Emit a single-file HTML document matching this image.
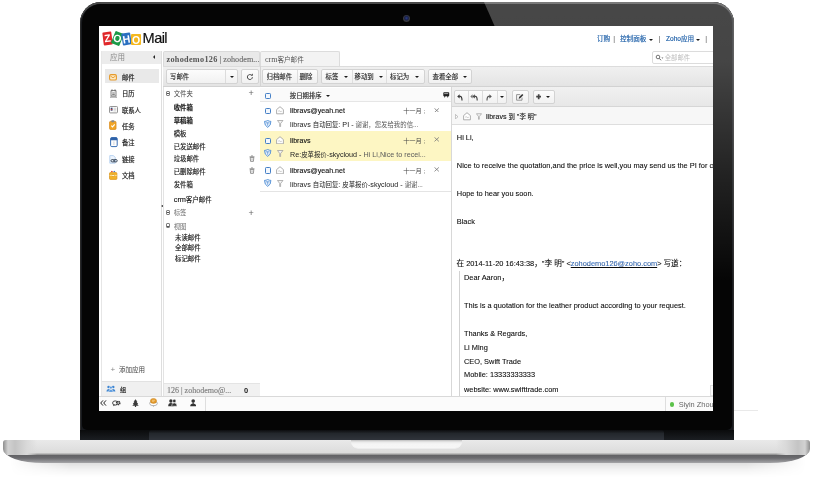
<!DOCTYPE html>
<html lang="zh-CN">
<head>
<meta charset="utf-8">
<title>Zoho Mail</title>
<style>
html,body{margin:0;padding:0;}
body{width:816px;height:480px;background:#fff;position:relative;overflow:hidden;
 font-family:"Liberation Sans","Noto Sans CJK SC",sans-serif;font-size:8px;color:#222;}
.a{position:absolute;}
/* ---------- laptop ---------- */
#lid{left:80px;top:2px;width:654px;height:438px;background:#17191d;border-radius:21px 21px 0 0;overflow:hidden;
 box-shadow:inset 0 2px 0 #4a4a4a, inset 1px 0 0 #2a2a2a, inset -1px 0 0 #2a2a2a;}
#lidin{left:2px;top:2px;width:650px;height:426px;background:#050505;border-radius:19px 19px 5px 5px;}
#glare{left:0;top:0;width:654px;height:300px;
 background:linear-gradient(180deg,rgba(255,255,255,.265) 0,rgba(255,255,255,.255) 60px,rgba(255,255,255,.12) 170px,rgba(255,255,255,0) 280px);
 clip-path:polygon(404px 0,654px 0,654px 300px,536px 300px);}
#lidbot{left:0;top:428px;width:654px;height:10px;background:linear-gradient(180deg,#0a0b0c 0,#1b1e22 100%);}
#hinge{left:69px;top:428px;width:515px;height:10px;background:linear-gradient(180deg,#0c0d0f 0,#23272c 35%,#30343b 100%);border-radius:3px 3px 0 0;}
#cam{left:323px;top:13px;width:7px;height:7px;border-radius:50%;background:radial-gradient(circle at 50% 45%,#2a3c8a 0,#1a2248 35%,#3a3a3e 60%,#1a1a1a 100%);}
#screen{left:99px;top:26px;width:614px;height:385px;background:#fff;overflow:hidden;}
#scr{left:-99px;top:-26px;width:816px;height:480px;will-change:transform;}
#shadow{left:10px;top:455px;width:796px;height:22px;background:linear-gradient(180deg,rgba(0,0,0,.13) 0,rgba(0,0,0,.12) 8px,rgba(0,0,0,.05) 14px,rgba(0,0,0,0) 22px);
 -webkit-mask-image:linear-gradient(90deg,transparent 0,#000 60px,#000 736px,transparent 796px);mask-image:linear-gradient(90deg,transparent 0,#000 60px,#000 736px,transparent 796px);}
#base{left:3px;top:440px;width:807px;height:23px;border-radius:3px 3px 40px 40px / 3px 3px 14px 14px;overflow:hidden;
 background:linear-gradient(180deg,#e9e9e9 0,#e3e3e3 6px,#dcdcdc 12.5px,#a8a8a8 14.200px,#636366 15.500px,#6b6b6f 18px,#8e8e91 21px,#a6a6a8 23px);}
#baseL{left:0;top:0;width:34px;height:15px;background:linear-gradient(90deg,#8e8e8e 0,#d2d2d2 5px,#c4c4c4 12px,#d9d9d9 24px,rgba(225,225,225,0) 34px);}
#baseR{right:0;top:0;width:34px;height:15px;background:linear-gradient(270deg,#8e8e8e 0,#d2d2d2 5px,#c4c4c4 12px,#d9d9d9 24px,rgba(225,225,225,0) 34px);}
#notch{left:351px;top:440px;width:111px;height:8px;border-radius:0 0 7px 7px;background:linear-gradient(180deg,#bdbdbd 0,#e9e9e9 2px,#f5f5f5 4px,#f6f6f6 100%);box-shadow:0 .5px 0 #fafafa;}
#artline{left:714px;top:410px;width:44px;height:1px;background:#e9e9e9;}

/* ---------- screen ---------- */
#scr{font-size:6.5px;line-height:10px;color:#222;}
.t{position:absolute;white-space:nowrap;line-height:10px;}
.lg{border-radius:1px;text-align:center;}
.lg span{display:block;font:bold 10.500px/12.500px "Liberation Sans",sans-serif;color:#fff;margin:0 -2px;}
.lnk{color:#1d5fa8;font-size:6.600px;-webkit-text-stroke:.15px #1d5fa8;}
.sep{font-size:7px;color:#555;}
.dd{width:0;height:0;border:2.300px solid transparent;border-top:2.700px solid #1a1a1a;border-bottom:0;}
.sb{font-size:6.300px;color:#2a2a2a;-webkit-text-stroke:.2px #2a2a2a;margin-top:.9px;}
.btn{background:linear-gradient(180deg,#fcfcfc 0,#f1f1f1 100%);border:1px solid #d3d3d3;border-radius:2px;box-sizing:border-box;}
.bt{font-size:6.400px;color:#1c1c1c;-webkit-text-stroke:.12px #1c1c1c;}
.fh{font-size:6.400px;color:#444;}
.fo{font-size:6.400px;color:#1a1a1a;-webkit-text-stroke:.15px #1a1a1a;}
.plus{font-size:9px;color:#666;margin-top:1.200px;}
.pm{width:4.400px;height:5px;border:.8px solid #808080;border-radius:1px;box-sizing:border-box;}
.pm:after{content:"";position:absolute;left:.5px;top:1.300px;width:1.800px;height:.8px;background:#555;}
.cb{width:6px;height:6.400px;border:.9px solid #447fc6;border-radius:1.300px;box-sizing:border-box;background:#f4f8fd;}
.fr{font-size:7.100px;color:#111;-webkit-text-stroke:.12px #111;margin-top:.8px;}
.dt{font-size:6.200px;color:#444;margin-top:.8px;}
.sj{font-size:7.200px;color:#222;margin-top:.7px;}
.sj .g,.g{color:#5a5a5a;}
.c{font-size:6.400px;}
.rd{font-size:7.400px;color:#0a0a0a;margin-top:.8px;-webkit-text-stroke:.08px #0a0a0a;}
.rd .c{font-size:7.600px;}
</style>
</head>
<body>
<div class="a" id="shadow"></div>
<div class="a" id="base"><div class="a" id="baseL"></div><div class="a" id="baseR"></div></div>
<div class="a" id="notch"></div>
<div class="a" id="artline"></div>
<div class="a" id="lid">
 <div class="a" id="lidin"></div>
 <div class="a" id="lidbot"></div>
 <div class="a" id="hinge"></div>
 <div class="a" id="glare"></div>
 <div class="a" id="cam"></div>
</div>
<div class="a" id="screen"><div class="a" id="scr">
<!-- header -->
<div class="a" style="left:99px;top:26px;width:614px;height:25px;background:#fff;"></div>
<div class="a lg" style="left:102.5px;top:32px;width:9px;height:12.5px;background:#e0282b;transform:rotate(-7deg);"><span>Z</span></div>
<div class="a lg" style="left:112.5px;top:31.5px;width:9px;height:12.5px;background:#1c9a48;transform:rotate(22deg);"><span>O</span></div>
<div class="a lg" style="left:122px;top:33px;width:8.5px;height:12px;background:#2a6fc0;transform:rotate(-9deg);"><span>H</span></div>
<div class="a lg" style="left:131px;top:33.5px;width:10px;height:11px;background:#f5b81f;"><span>O</span></div>
<div class="t" style="left:142.600px;top:30px;font-size:14.600px;line-height:16px;color:#111;letter-spacing:-.6px;-webkit-text-stroke:.2px #111;">Mail</div>
<div class="t lnk" style="left:597px;top:34.2px;">订购</div><div class="t sep" style="left:613.2px;top:34px;">|</div>
<div class="t lnk" style="left:620px;top:34.2px;">控制面板</div><div class="a dd" style="left:648.6px;top:38.6px;"></div><div class="t sep" style="left:658.4px;top:34px;">|</div>
<div class="t lnk" style="left:666px;top:34.2px;">Zoho应用</div><div class="a dd" style="left:695.6px;top:38.600px;"></div><div class="t sep" style="left:705.2px;top:34px;">|</div>
<!-- search -->
<div class="a" style="left:652px;top:51px;width:70px;height:13px;border:1px solid #dcdcdc;border-radius:2px;box-sizing:border-box;background:#fff;"></div>
<svg class="a" style="left:655px;top:54px;" width="10" height="8" viewBox="0 0 10 8"><circle cx="3" cy="3" r="1.800" fill="none" stroke="#666" stroke-width=".9"/><path d="M4.300 4.300L6 6.300" stroke="#666" stroke-width="1"/><path d="M6.400 3.400h2l-1 1.300z" fill="#666"/></svg>
<div class="t" style="left:664.8px;top:52.8px;color:#bcbcbc;font-size:6.300px;">全部邮件</div>

<!-- left sidebar -->
<div class="a" style="left:101px;top:51px;width:61px;height:345px;background:#fff;border-left:1px solid #e6e6e6;border-right:1px solid #dedede;box-sizing:border-box;"></div>
<div class="a" style="left:102px;top:51px;width:59px;height:12.5px;background:#ececec;"></div>
<div class="t" style="left:110px;top:52.5px;color:#8a8a8a;font-size:7.5px;">应用</div>
<div class="a" style="left:153px;top:55px;width:0;height:0;border:2.2px solid transparent;border-right:2.6px solid #222;border-left:0;"></div>
<div class="a" style="left:104.5px;top:69px;width:54px;height:13.5px;background:#e9e9e9;"></div>
<!-- sidebar items -->
<svg class="a" style="left:109px;top:73.5px;" width="8" height="7" viewBox="0 0 8 7"><rect x=".6" y=".6" width="6.8" height="5.4" rx="1.3" fill="#fde9c3" stroke="#e59a2c" stroke-width="1.1"/><path d="M1.4 2l2.6 1.8L6.6 2" fill="none" stroke="#e59a2c" stroke-width=".9"/></svg>
<div class="t sb" style="left:122px;top:72px;">邮件</div>
<svg class="a" style="left:109.5px;top:88.5px;" width="7" height="9.5" viewBox="0 0 7 9.5"><path d="M1 1.5h5v5.5h-5z" fill="#f4f4f4" stroke="#777" stroke-width=".9"/><path d="M2 .3v2M5 .3v2M2.2 4h2.6M2.2 5.5h2.6" stroke="#666" stroke-width=".8"/><path d="M.6 7.6h5.8v1.2h-5.8z" fill="#fff" stroke="#888" stroke-width=".7"/></svg>
<div class="t sb" style="left:122px;top:88.4px;">日历</div>
<svg class="a" style="left:108.5px;top:106px;" width="9" height="8" viewBox="0 0 9 8"><rect x=".5" y=".5" width="8" height="6.4" rx=".8" fill="#fbfbfb" stroke="#8a8a8a" stroke-width=".9"/><rect x="1.7" y="1.7" width="1.8" height="3" fill="#3b4a78"/><circle cx="2.6" cy="3.6" r=".7" fill="#d83a2c"/><path d="M4.6 2.3h2.6M4.6 3.6h2.6M4.6 4.9h2.6" stroke="#bbb" stroke-width=".6"/></svg>
<div class="t sb" style="left:122px;top:104.8px;">联系人</div>
<svg class="a" style="left:109px;top:120px;" width="8" height="10" viewBox="0 0 8 10"><rect x=".6" y="1.4" width="6.4" height="8" rx=".9" fill="#f2a626" stroke="#d98a1a" stroke-width=".8"/><rect x="2.3" y=".3" width="3" height="2" rx=".6" fill="#888"/><path d="M2.3 5.6l1.2 1.3 2.2-2.6" fill="none" stroke="#fff" stroke-width="1.1"/></svg>
<div class="t sb" style="left:122px;top:121.2px;">任务</div>
<svg class="a" style="left:109.5px;top:137px;" width="8" height="10.5" viewBox="0 0 8 10.5"><rect x=".6" y=".6" width="6.6" height="9" rx="1.2" fill="#fdfdfd" stroke="#3a6fb4" stroke-width="1"/><path d="M.6 1.6q0-1 1-1h4.6q1 0 1 1v1.6h-6.6z" fill="#2f62a8"/><path d="M3.9 4.4v3.6" stroke="#c5cbd4" stroke-width=".8"/></svg>
<div class="t sb" style="left:122px;top:137.6px;">备注</div>
<svg class="a" style="left:108.5px;top:154.5px;" width="9" height="9" viewBox="0 0 9 9"><path d="M.8.6h3.6l1.8 1.8v5.8h-5.4z" fill="#eef5fd" stroke="#a9c9ee" stroke-width=".8"/><rect x="2" y="4.6" width="3.6" height="2.3" rx="1.1" fill="none" stroke="#3c4a5c" stroke-width="1"/><rect x="4.6" y="4.6" width="3.6" height="2.3" rx="1.1" fill="none" stroke="#3c4a5c" stroke-width="1"/></svg>
<div class="t sb" style="left:122px;top:154px;">链接</div>
<svg class="a" style="left:109px;top:170px;" width="8.5" height="10" viewBox="0 0 8.5 10"><path d="M1.6 2.6l1-1.8 1.6.9z" fill="#d8392b"/><path d="M4 1.6l1.6-.8.9 1.8z" fill="#3a74c4"/><rect x=".5" y="2.6" width="7.4" height="6.8" rx=".9" fill="#f3b32b" stroke="#d9901a" stroke-width=".7"/><path d="M.6 5.4h7.2" stroke="#fbe3a0" stroke-width=".9"/><rect x="3.3" y="4.8" width="1.8" height="1.5" fill="#fff3cf" stroke="#c77f12" stroke-width=".4"/></svg>
<div class="t sb" style="left:122px;top:170.4px;">文档</div>
<div class="t" style="left:110.5px;top:364.5px;color:#888;font-size:8px;">+</div>
<div class="t" style="left:119px;top:364.8px;color:#444;font-size:6.500px;">添加应用</div>
<div class="a" style="left:102px;top:380.5px;width:59px;height:15.5px;background:#f0f0f0;border-top:1px solid #e2e2e2;box-sizing:border-box;"></div>
<svg class="a" style="left:106px;top:384.5px;" width="10" height="7.5" viewBox="0 0 10 7.5"><circle cx="2.6" cy="2" r="1.3" fill="#3f86d2"/><path d="M.4 6.6q0-2.6 2.2-2.6t2.2 2.6z" fill="#3f86d2"/><circle cx="7.2" cy="2" r="1.3" fill="#3f86d2"/><path d="M5 6.6q0-2.6 2.2-2.6t2.2 2.6z" fill="#3f86d2"/><circle cx="4.9" cy="2.6" r="1.4" fill="#5b9be0" stroke="#f0f0f0" stroke-width=".5"/><path d="M2.6 7.3q0-2.9 2.3-2.9t2.3 2.9z" fill="#5b9be0" stroke="#f0f0f0" stroke-width=".5"/></svg>
<div class="t sb" style="left:120px;top:384.6px;font-size:6.200px;">组</div>
<!-- tabs row -->
<div class="a" style="left:163px;top:51px;width:97px;height:14.5px;background:#e9e9e9;border:1px solid #dadada;border-bottom:0;box-sizing:border-box;border-radius:2px 2px 0 0;"></div>
<div class="t" style="left:166.5px;top:55px;font-family:'Liberation Serif','Noto Serif CJK SC',serif;font-size:8.200px;color:#707070;-webkit-text-stroke:.15px #707070;"><b style="color:#555;letter-spacing:.3px;-webkit-text-stroke:0">zohodemo126</b> | zohodem...</div>
<div class="a" style="left:260px;top:51px;width:80px;height:15px;background:#f3f3f3;border:1px solid #dcdcdc;border-bottom:0;box-sizing:border-box;border-radius:2px 2px 0 0;"></div>
<div class="t" style="left:265px;top:55px;font-family:'Liberation Serif','Noto Sans CJK SC',serif;font-size:8px;color:#555;">crm<span style="font-size:6.6px;">客户邮件</span></div>
<!-- toolbar row 1 -->
<div class="a" style="left:163px;top:65.5px;width:550px;height:21.5px;background:linear-gradient(180deg,#f0f0f0 0,#e4e4e4 100%);border-top:1px solid #dcdcdc;border-bottom:1px solid #d2d2d2;box-sizing:border-box;"></div>
<div class="a" style="left:260px;top:66px;width:1px;height:21px;background:#d4d4d4;"></div>
<div class="a btn" style="left:165.5px;top:69px;width:72px;height:15px;"></div>
<div class="a" style="left:224.5px;top:70px;width:1px;height:13px;background:#dcdcdc;"></div>
<div class="t bt" style="left:170px;top:71.900px;">写邮件</div>
<div class="a dd" style="left:229.5px;top:76px;"></div>
<div class="a btn" style="left:240.5px;top:69px;width:18px;height:15px;"></div>
<svg class="a" style="left:245.5px;top:72.5px;" width="8" height="8" viewBox="0 0 8 8"><path d="M6.4 4.2a2.5 2.5 0 1 1-.8-2" fill="none" stroke="#444" stroke-width="1"/><path d="M4.6 2.6l2.2.2.1-2.2z" fill="#444"/></svg>
<!-- folder panel -->
<div class="a" style="left:162.5px;top:87px;width:98px;height:309px;background:#fff;border-left:1px solid #e3e3e3;border-right:1px solid #dcdcdc;box-sizing:border-box;"></div>
<div class="a" style="left:161px;top:205px;width:0;height:0;border:1.8px solid transparent;border-right:2.2px solid #222;border-left:0;"></div>
<div class="a pm" style="left:165.8px;top:91px;"></div>
<div class="t fh" style="left:173.7px;top:89.3px;">文件夹</div>
<div class="t plus" style="left:248.5px;top:87.3px;">+</div>
<div class="t fo" style="left:173.7px;top:102.8px;font-weight:bold;">收件箱</div>
<div class="t fo" style="left:173.7px;top:115.8px;font-weight:bold;">草稿箱</div>
<div class="t fo" style="left:173.7px;top:128.6px;">模板</div>
<div class="t fo" style="left:173.7px;top:141.6px;">已发送邮件</div>
<div class="t fo" style="left:173.7px;top:154.4px;">垃圾邮件</div>
<div class="t fo" style="left:173.7px;top:167px;">已删除邮件</div>
<div class="t fo" style="left:173.7px;top:179.8px;">发件箱</div>
<div class="t fo" style="left:173.7px;top:194.5px;"><span style="font-size:7.4px">crm</span>客户邮件</div>
<svg class="a tr" style="left:248.800px;top:154.6px;" width="6" height="7" viewBox="0 0 6 7"><path d="M1.2 2.400h3.600l-.4 4h-2.800z" fill="#fff" stroke="#6e6e6e" stroke-width=".7"/><path d="M.5 1.800h5M2.200.8h1.600" stroke="#6e6e6e" stroke-width=".7"/><path d="M3 3.3v2.2" stroke="#777" stroke-width=".6"/></svg>
<svg class="a tr" style="left:248.800px;top:167.4px;" width="6" height="7" viewBox="0 0 6 7"><path d="M1.2 2.400h3.600l-.4 4h-2.800z" fill="#fff" stroke="#6e6e6e" stroke-width=".7"/><path d="M.5 1.800h5M2.200.8h1.600" stroke="#6e6e6e" stroke-width=".7"/><path d="M3 3.3v2.2" stroke="#777" stroke-width=".6"/></svg>
<div class="a pm" style="left:165.8px;top:210.2px;"></div>
<div class="t fh" style="left:173.7px;top:208.3px;color:#6e6e6e;">标签</div>
<div class="t plus" style="left:248.5px;top:206.5px;">+</div>
<div class="a pm" style="left:165.8px;top:223.4px;"></div>
<div class="t fh" style="left:173.7px;top:221.500px;color:#6e6e6e;">视图</div>
<div class="t fo" style="left:175px;top:233px;">未读邮件</div>
<div class="t fo" style="left:175px;top:243.3px;">全部邮件</div>
<div class="t fo" style="left:175px;top:254.1px;">标记邮件</div>
<div class="a" style="left:163.5px;top:383px;width:96px;height:13px;background:#f1f1f1;border-top:1px solid #e4e4e4;box-sizing:border-box;"></div>
<div class="t" style="left:167px;top:385.5px;font-family:'Liberation Serif',serif;font-size:8px;color:#808080;-webkit-text-stroke:.15px #808080;margin-top:.6px;">126 | zohodemo@...</div>
<div class="t" style="left:244px;top:385.5px;font-size:7.5px;font-weight:bold;color:#222;">0</div>
<!-- toolbar row 1 buttons -->
<div class="a btn" style="left:261.5px;top:69px;width:56px;height:15px;"></div>
<div class="a" style="left:296.5px;top:70px;width:1px;height:13px;background:#dedede;"></div>
<div class="t bt" style="left:266.5px;top:71.900px;">归档邮件</div>
<div class="t bt" style="left:299.5px;top:71.900px;">删除</div>
<div class="a btn" style="left:320.5px;top:69px;width:104px;height:15px;"></div>
<div class="a" style="left:351.5px;top:70px;width:1px;height:13px;background:#dedede;"></div>
<div class="a" style="left:386px;top:70px;width:1px;height:13px;background:#dedede;"></div>
<div class="t bt" style="left:325.5px;top:71.900px;">标签</div><div class="a dd" style="left:343.5px;top:76px;"></div>
<div class="t bt" style="left:354.5px;top:71.900px;">移动到</div><div class="a dd" style="left:379px;top:76px;"></div>
<div class="t bt" style="left:390px;top:71.900px;">标记为</div><div class="a dd" style="left:415px;top:76px;"></div>
<div class="a btn" style="left:427.5px;top:69px;width:44.5px;height:15px;"></div>
<div class="t bt" style="left:432.5px;top:71.900px;">查看全部</div><div class="a dd" style="left:463px;top:76px;"></div>
<!-- message list -->
<div class="a" style="left:260px;top:87px;width:191px;height:309px;background:#fff;"></div>
<div class="a" style="left:260px;top:88px;width:191px;height:13.5px;background:#fafafa;border-bottom:1px solid #e6e6e6;box-sizing:border-box;"></div>
<div class="a cb" style="left:264.5px;top:92.5px;"></div>
<div class="t bt" style="left:289.8px;top:90.6px;">按日期排序</div><div class="a dd" style="left:325.5px;top:95px;"></div>
<svg class="a" style="left:443px;top:92.3px;" width="6.5" height="6" viewBox="0 0 6.5 6"><rect x=".3" y=".3" width="5.9" height="4" rx=".8" fill="#222"/><path d="M1.2 1.6h4" stroke="#fff" stroke-width=".6"/><path d="M.8 4.3h1.8l-.9 1.5zM3.8 4.3h1.8l-.9 1.5z" fill="#222"/></svg>
<!-- row 1 -->
<div class="a" style="left:260px;top:130.5px;width:191px;height:30.5px;background:#fdf6c3;"></div>
<div class="a" style="left:260px;top:190.5px;width:191px;height:1px;background:#e4e4e4;"></div>
<div class="a cb" style="left:264.5px;top:107.8px;"></div>
<svg class="a" style="left:276.4px;top:106.0px;" width="8" height="8.5" viewBox="0 0 8 8.5"><path d="M.6 3.6L4 .7l3.4 2.9v4.2H.6z" fill="#fff" stroke="#9a9a9a" stroke-width=".8"/><path d="M2.2 5.2q.9-.9 1.8 0t1.8 0" fill="none" stroke="#aaa" stroke-width=".6"/></svg>
<div class="t fr" style="left:290px;top:105.6px;">libravs@yeah.net</div>
<div class="t dt" style="left:403.2px;top:105.6px;">十一月 ;</div>
<svg class="a" style="left:433.6px;top:107.6px;" width="5.4" height="4.8" viewBox="0 0 5.4 4.8"><path d="M.5.4l4.4 4M4.9.4L.5 4.4" stroke="#777" stroke-width=".8"/></svg>
<svg class="a" style="left:264px;top:119.6px;" width="7.5" height="8" viewBox="0 0 7.5 8"><path d="M3.7.5q1.6.9 3.2.9 0 4.4-3.2 6-3.200-1.600-3.200-6 1.600 0 3.200-.9z" fill="#eaf2fc" stroke="#4a8ad4" stroke-width=".9"/><path d="M1.800 2.800h3.800M3.700 2.800v3" stroke="#4a8ad4" stroke-width=".7"/></svg>
<svg class="a" style="left:277px;top:120.2px;" width="6.5" height="7" viewBox="0 0 6.5 7"><path d="M.5.5h5.500L3.600 3.500v3h-.9v-3z" fill="#f4f4f4" stroke="#999" stroke-width=".7"/></svg>
<div class="t sj" style="left:290px;top:119.6px;">libravs <span class="c">自动回复</span>: PI - <span class="c g">谢谢，您发给我的信...</span></div>
<div class="a cb" style="left:264.5px;top:137.5px;"></div>
<svg class="a" style="left:276.4px;top:135.7px;" width="8" height="8.5" viewBox="0 0 8 8.5"><path d="M.6 3.6L4 .7l3.4 2.9v4.2H.6z" fill="#fff" stroke="#9a9a9a" stroke-width=".8"/><path d="M2.2 5.2q.9-.9 1.8 0t1.8 0" fill="none" stroke="#aaa" stroke-width=".6"/></svg>
<div class="t fr" style="left:290px;top:135.3px;">libravs</div>
<div class="t dt" style="left:403.2px;top:135.3px;">十一月 ;</div>
<svg class="a" style="left:433.6px;top:137.3px;" width="5.4" height="4.8" viewBox="0 0 5.4 4.8"><path d="M.5.4l4.4 4M4.9.4L.5 4.4" stroke="#777" stroke-width=".8"/></svg>
<svg class="a" style="left:264px;top:149.3px;" width="7.5" height="8" viewBox="0 0 7.5 8"><path d="M3.7.5q1.6.9 3.2.9 0 4.4-3.2 6-3.200-1.600-3.200-6 1.600 0 3.200-.9z" fill="#eaf2fc" stroke="#4a8ad4" stroke-width=".9"/><path d="M1.800 2.800h3.800M3.700 2.800v3" stroke="#4a8ad4" stroke-width=".7"/></svg>
<svg class="a" style="left:277px;top:149.9px;" width="6.5" height="7" viewBox="0 0 6.5 7"><path d="M.5.5h5.500L3.600 3.500v3h-.9v-3z" fill="#f4f4f4" stroke="#999" stroke-width=".7"/></svg>
<div class="t sj" style="left:290px;top:149.3px;">Re:<span class="c">皮革报价</span>-skycloud - <span class="g">Hi Li,Nice to recei...</span></div>
<div class="a cb" style="left:264.5px;top:167.3px;"></div>
<svg class="a" style="left:276.4px;top:165.5px;" width="8" height="8.5" viewBox="0 0 8 8.5"><path d="M.6 3.6L4 .7l3.4 2.9v4.2H.6z" fill="#fff" stroke="#9a9a9a" stroke-width=".8"/><path d="M2.2 5.2q.9-.9 1.8 0t1.8 0" fill="none" stroke="#aaa" stroke-width=".6"/></svg>
<div class="t fr" style="left:290px;top:165.1px;">libravs@yeah.net</div>
<div class="t dt" style="left:403.2px;top:165.1px;">十一月 ;</div>
<svg class="a" style="left:433.6px;top:167.1px;" width="5.4" height="4.8" viewBox="0 0 5.4 4.8"><path d="M.5.4l4.4 4M4.9.4L.5 4.4" stroke="#777" stroke-width=".8"/></svg>
<svg class="a" style="left:264px;top:179.1px;" width="7.5" height="8" viewBox="0 0 7.5 8"><path d="M3.7.5q1.6.9 3.2.9 0 4.4-3.2 6-3.200-1.600-3.200-6 1.600 0 3.200-.9z" fill="#eaf2fc" stroke="#4a8ad4" stroke-width=".9"/><path d="M1.800 2.800h3.800M3.700 2.800v3" stroke="#4a8ad4" stroke-width=".7"/></svg>
<svg class="a" style="left:277px;top:179.7px;" width="6.5" height="7" viewBox="0 0 6.5 7"><path d="M.5.5h5.500L3.600 3.500v3h-.9v-3z" fill="#f4f4f4" stroke="#999" stroke-width=".7"/></svg>
<div class="t sj" style="left:290px;top:179.1px;">libravs <span class="c">自动回复</span>: <span class="c">皮革报价</span>-skycloud - <span class="c g">谢谢...</span></div>
<!-- reader -->
<div class="a" style="left:451px;top:87px;width:262px;height:309px;background:#fff;border-left:1px solid #d8d8d8;box-sizing:border-box;"></div>
<div class="a" style="left:452px;top:87px;width:261px;height:19.5px;background:linear-gradient(180deg,#f1f1f1 0,#e7e7e7 100%);border-bottom:1px solid #d6d6d6;box-sizing:border-box;"></div>
<div class="a btn" style="left:453.8px;top:89.8px;width:53.4px;height:14.4px;"></div>
<div class="a" style="left:467.6px;top:90.8px;width:1px;height:12.4px;background:#dcdcdc;"></div>
<div class="a" style="left:482.4px;top:90.8px;width:1px;height:12.4px;background:#dcdcdc;"></div>
<div class="a" style="left:497px;top:90.8px;width:1px;height:12.4px;background:#dcdcdc;"></div>
<svg class="a" style="left:456.5px;top:93.5px;" width="7" height="7" viewBox="0 0 7 7"><path d="M2.600.2L.2 2.400l2.400 2.200z" fill="#333"/><path d="M2.200 2.400H3.200Q5 2.400 5 6.600" fill="none" stroke="#333" stroke-width="1.150"/></svg>
<svg class="a" style="left:470px;top:93.5px;" width="9" height="7" viewBox="0 0 9 7"><path d="M2.600.3L.3 2.400l2.300 2.100z" fill="#777"/><path d="M4.800.2L2.400 2.400l2.400 2.200z" fill="#444"/><path d="M4.400 2.400H5.400Q7.200 2.400 7.200 6.600" fill="none" stroke="#444" stroke-width="1.150"/></svg>
<svg class="a" style="left:485px;top:93.5px;" width="7" height="7" viewBox="0 0 7 7"><path d="M4.400.2l2.400 2.200-2.400 2.200z" fill="#555"/><path d="M4.800 2.400H3.800Q2 2.400 2 6.600" fill="none" stroke="#555" stroke-width="1.150"/></svg>
<div class="a dd" style="left:500px;top:96.3px;"></div>
<div class="a btn" style="left:512px;top:89.8px;width:17px;height:14.4px;"></div>
<svg class="a" style="left:516px;top:93px;" width="8" height="8" viewBox="0 0 8 8"><path d="M.6 1.600h3.600M.6 1.600v5.600h5.400V4.600" fill="none" stroke="#8a8a8a" stroke-width=".9"/><path d="M2.600 5.800l.5-1.700L6.200.9l1.200 1.200-3.200 3.200z" fill="#333"/></svg>
<div class="a btn" style="left:533px;top:89.8px;width:21.8px;height:14.4px;"></div>
<svg class="a" style="left:535.6px;top:94.2px;" width="5.4" height="5.4" viewBox="0 0 5.4 5.400"><path d="M2.700.2v5M.2 2.700h5" stroke="#444" stroke-width="1.700"/></svg>
<div class="a dd" style="left:546px;top:96.300px;"></div>
<!-- mail header row -->
<div class="a" style="left:452px;top:106.500px;width:261px;height:18px;background:#f7f7f7;border-bottom:1px solid #dedede;box-sizing:border-box;"></div>
<svg class="a" style="left:455.300px;top:114px;" width="3.500" height="5.400" viewBox="0 0 3.500 5.400"><path d="M.4.500l2.600 2.200L.4 4.900z" fill="#fff" stroke="#999" stroke-width=".6"/></svg>
<svg class="a" style="left:463.200px;top:112px;" width="8" height="8.500" viewBox="0 0 8 8.500"><path d="M.6 3.600L4 .7l3.400 2.900v4.200H.6z" fill="#fff" stroke="#9a9a9a" stroke-width=".8"/><path d="M2.200 5.200q.9-.9 1.800 0t1.800 0" fill="none" stroke="#aaa" stroke-width=".6"/></svg>
<svg class="a" style="left:476.200px;top:113px;" width="6" height="7" viewBox="0 0 6.500 7"><path d="M.5.500h5.500L3.600 3.500v3h-.9v-3z" fill="#f4f4f4" stroke="#999" stroke-width=".7"/></svg>
<div class="t fr" style="left:486px;top:110.900px;font-weight:normal;color:#222;">libravs <span class="c">到</span> "<span class="c">李 明</span>"</div>
<!-- body -->
<div class="t rd" style="left:456.800px;top:132.600px;">Hi Li,</div>
<div class="t rd" style="left:456.800px;top:160.400px;">Nice to receive the quotation,and the price is well,you may send us the PI for comparison.</div>
<div class="t rd" style="left:456.800px;top:188.200px;">Hope to hear you soon.</div>
<div class="t rd" style="left:456.800px;top:216px;">Black</div>
<div class="t rd" style="left:456.500px;top:258px;"><span class="c">在</span> 2014-11-20 16:43:38<span class="c">，</span>"<span class="c">李 明</span>" &lt;<span style="color:#3b78d0;text-decoration:underline;">zohodemo126@zoho.com</span>&gt; <span class="c">写道：</span></div>
<div class="a" style="left:459px;top:270.500px;width:1px;height:126px;background:#d2d2d2;"></div>
<div class="t rd" style="left:464px;top:271.800px;">Dear Aaron<span class="c">，</span></div>
<div class="t rd" style="left:464px;top:299.800px;">This is a quotation for the leather product according to your request.</div>
<div class="t rd" style="left:464px;top:328px;">Thanks &amp; Regards,</div>
<div class="t rd" style="left:464px;top:342.400px;">Li Ming</div>
<div class="t rd" style="left:464px;top:356px;">CEO, Swift Trade</div>
<div class="t rd" style="left:464px;top:369.700px;">Mobile: 13333333333</div>
<div class="t rd" style="left:464px;top:384px;">website: www.swifttrade.com</div>
<div class="a" style="left:709.500px;top:384.500px;width:6px;height:11px;border:1px solid #e2e2e2;background:#fafafa;box-sizing:border-box;"></div>
<!-- status bar -->
<div class="a" style="left:99px;top:395.500px;width:614px;height:15.500px;background:#fbfbfb;border-top:1px solid #d9d9d9;box-sizing:border-box;"></div>
<div class="a" style="left:204.500px;top:396.500px;width:1px;height:14.500px;background:#dedede;"></div>
<div class="a" style="left:665px;top:396.500px;width:1px;height:14.500px;background:#dedede;"></div>
<div class="a" style="left:669.500px;top:402px;width:4.600px;height:4.600px;border-radius:50%;background:#5cc24a;"></div>
<div class="t" style="left:678.700px;top:399.500px;font-size:7.400px;color:#666;">Siyin Zhou</div>
<svg class="a" style="left:100px;top:400px;" width="6.500" height="6" viewBox="0 0 6.500 6"><path d="M3 .4L.7 3 3 5.600M6 .4L3.700 3 6 5.600" fill="none" stroke="#222" stroke-width="1"/></svg>
<svg class="a" style="left:112.200px;top:400.300px;" width="9" height="6.500" viewBox="0 0 9 6.500"><ellipse cx="3.200" cy="3" rx="2.600" ry="2.100" fill="#fff" stroke="#333" stroke-width=".9"/><path d="M1.600 4.600L1 6.200l2-1.200z" fill="#333"/><circle cx="6.200" cy="3" r="1.700" fill="#fff" stroke="#333" stroke-width="1.300" stroke-dasharray="1 .55"/><circle cx="6.200" cy="3" r="1.200" fill="none" stroke="#333" stroke-width=".7"/></svg>
<svg class="a" style="left:132px;top:398.800px;" width="7" height="8" viewBox="0 0 7 8"><path d="M3.500.2L1.600 2.800h.9L.8 5h1L.3 6.700h2.600V8h1.200V6.700h2.600L5.200 5h1L4.500 2.800h.9z" fill="#3a3a3a"/></svg>
<svg class="a" style="left:149px;top:398px;" width="9" height="9" viewBox="0 0 9 9"><path d="M.6 5.200q0 2.600 3.900 2.600t3.900-2.600q0-1.200-1.500-1.200H2.100Q.6 4 .6 5.200z" fill="#fff" stroke="#999" stroke-width=".7"/><path d="M3.600 7.600l.9 1.200.9-1.200z" fill="#999"/><ellipse cx="4.500" cy="2.900" rx="3.100" ry="2.500" fill="#e39a2c" stroke="#c9821c" stroke-width=".5"/><path d="M3 2.300h3M3 3.300h2.200" stroke="#f8d79a" stroke-width=".6"/></svg>
<svg class="a" style="left:168px;top:399.300px;" width="9" height="7.400" viewBox="0 0 9 7.400"><circle cx="2.900" cy="2" r="1.700" fill="#333"/><path d="M.2 7.200q0-3.300 2.700-3.300t2.700 3.300z" fill="#333"/><circle cx="6.300" cy="2" r="1.700" fill="#333" stroke="#fbfbfb" stroke-width=".5"/><path d="M3.600 7.200q0-3.300 2.700-3.300T9 7.200z" fill="#333" stroke="#fbfbfb" stroke-width=".5"/></svg>
<svg class="a" style="left:190px;top:399.300px;" width="6.400" height="7.400" viewBox="0 0 6.400 7.400"><circle cx="3.200" cy="2" r="1.800" fill="#333"/><path d="M2.500 3.400h1.400v1.400H2.500z" fill="#333"/><path d="M.2 7.200q0-2.800 3-2.800t3 2.800z" fill="#333"/></svg>

</div></div>
</body>
</html>
